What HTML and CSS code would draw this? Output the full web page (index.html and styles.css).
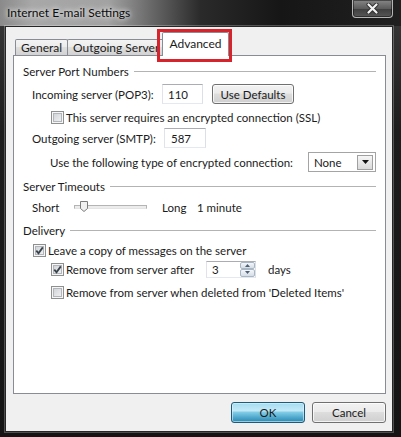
FILE: index.html
```html
<!DOCTYPE html>
<html lang="en">
<head>
  <meta charset="UTF-8">
  <meta name="viewport" content="width=device-width, initial-scale=1.0">
  <title>Internet E-mail Settings</title>
  <link rel="stylesheet" href="styles.css">
</head>
<body>
  <div class="window">
    <div class="titlebar">
      <span class="title">Internet E-mail Settings</span>
      <div class="close-btn">
        <svg width="13" height="11" viewBox="0 0 13 11">
          <path d="M2.5 1.5 L10.5 9.5 M10.5 1.5 L2.5 9.5" stroke="#2e2e2e" stroke-width="4" stroke-linecap="round"/>
          <path d="M2.5 1.5 L10.5 9.5 M10.5 1.5 L2.5 9.5" stroke="#f2f2f2" stroke-width="2.2" stroke-linecap="round"/>
        </svg>
      </div>
    </div>
    <div class="frame">
      <div class="client">
        <div class="tabs">
          <div class="tab tab-general">General</div>
          <div class="tab tab-outgoing">Outgoing Server</div>
          <div class="tab tab-advanced active">Advanced</div>
        </div>
        <div class="panel">
          <div class="group-title">Server Port Numbers</div>
          <div class="row row-port">
            <span class="label-in">Incoming server (POP3):</span>
            <div class="textbox port-in">110</div>
            <div class="btn btn-defaults">Use Defaults</div>
          </div>
          <div class="row row-ssl">
            <span class="check"></span>
            <span>This server requires an encrypted connection (SSL)</span>
          </div>
          <div class="row row-out">
            <span class="label-out">Outgoing server (SMTP):</span>
            <div class="textbox port-out">587</div>
          </div>
          <div class="row row-enc">
            <span>Use the following type of encrypted connection:</span>
            <div class="select">
              <span>None</span>
              <span class="arrow">
                <svg width="7" height="4" viewBox="0 0 7 4"><path d="M0 0 H7 L3.5 4 Z" fill="#111"/></svg>
              </span>
            </div>
          </div>

          <div class="group-title group-timeouts">Server Timeouts</div>
          <div class="row row-slider">
            <span class="label-short">Short</span>
            <div class="slider">
              <div class="track"></div>
              <svg class="thumb" width="8" height="11" viewBox="0 0 8 11">
                <path d="M0.5 0.5 H7.5 V7.5 L4 10.5 L0.5 7.5 Z" fill="#f1f1f1" stroke="#7c7c7c"/>
              </svg>
            </div>
            <span class="label-long">Long</span>
            <span>1 minute</span>
          </div>

          <div class="group-title group-delivery">Delivery</div>
          <div class="row row-leave">
            <span class="check checked">
              <svg width="9" height="9" viewBox="0 0 9 9"><path d="M1.3 4.6 L3.5 7.2 L7.8 1.4" fill="none" stroke="#39434c" stroke-width="1.8"/></svg>
            </span>
            <span>Leave a copy of messages on the server</span>
          </div>
          <div class="row row-after">
            <span class="check checked">
              <svg width="9" height="9" viewBox="0 0 9 9"><path d="M1.3 4.6 L3.5 7.2 L7.8 1.4" fill="none" stroke="#39434c" stroke-width="1.8"/></svg>
            </span>
            <span class="label-after">Remove from server after</span>
            <div class="spinner">
              <span class="spin-value">3</span>
              <div class="spin-btns">
                <span><svg width="5" height="3" viewBox="0 0 5 3"><path d="M0 3 L2.5 0 L5 3 Z" fill="#4d6073"/></svg></span>
                <span><svg width="5" height="3" viewBox="0 0 5 3"><path d="M0 0 L2.5 3 L5 0 Z" fill="#4d6073"/></svg></span>
              </div>
            </div>
            <span class="days">days</span>
          </div>
          <div class="row row-deleted">
            <span class="check"></span>
            <span>Remove from server when deleted from 'Deleted Items'</span>
          </div>
        </div>
        <div class="actions">
          <div class="btn btn-ok">OK</div>
          <div class="btn btn-cancel">Cancel</div>
        </div>
      </div>
    </div>
  </div>
</body>
</html>
```

FILE: styles.css
```css
* {
  margin: 0;
  padding: 0;
  box-sizing: border-box;
}

body {
  background: #000;
  font-family: Lato, "Noto Sans", sans-serif;
  font-size: 11.5px;
  color: #1b1b1b;
}

.window {
  width: 401px;
  height: 437px;
  display: flex;
  flex-direction: column;
  background: linear-gradient(to bottom, #3a3a3a, #1d1d1d 30%, #141414);
}

.titlebar {
  height: 26px;
  display: flex;
  align-items: flex-start;
  background: linear-gradient(to right, #8a8a8a 0%, #a8a8a8 8%, #a2a2a2 27%, #6c6c6c 37%, #2a2a2a 50%, #161616 70%, #202020 100%);
}

.title {
  padding-left: 7px;
  line-height: 26px;
  font-size: 12px;
  color: #0c0c0c;
  text-shadow: 0 0 5px #fff, 0 0 9px rgba(255, 255, 255, 0.6);
}

.close-btn {
  margin-left: auto;
  margin-right: 8px;
  width: 41px;
  height: 18px;
  border: 1px solid #b5b5b5;
  border-top: none;
  border-radius: 0 0 4px 4px;
  background: linear-gradient(#878787, #5c5c5c 50%, #3e3e3e 51%, #575757 100%);
  box-shadow: inset 0 0 0 1px rgba(0, 0, 0, 0.45);
  display: flex;
  align-items: center;
  justify-content: center;
}

.frame {
  flex: 1;
  display: flex;
  padding: 0 8px 5px 5px;
}

.client {
  flex: 1;
  display: flex;
  flex-direction: column;
  background: #f0f0f0;
  border: 1px solid #262626;
  box-shadow: 0 0 0 1px rgba(255, 255, 255, 0.25);
  padding: 5px 6px 8px 7px;
}

/* tabs */
.tabs {
  display: flex;
  align-items: flex-end;
  height: 24px;
  padding-left: 2px;
  margin-bottom: -1px;
  position: relative;
  z-index: 1;
}

.tab {
  height: 16px;
  margin-bottom: 1px;
  margin-right: -1px;
  border: 1px solid #898c95;
  border-bottom: none;
  border-radius: 2px 2px 0 0;
  background: linear-gradient(#f3f3f3, #ebebeb 50%, #dedede 50%, #d2d2d2);
  display: flex;
  align-items: center;
  justify-content: center;
  white-space: nowrap;
  font-size: 12px;
}

.tab-general {
  width: 53px;
}

.tab-outgoing {
  width: 97px;
  justify-content: flex-start;
  padding-left: 5px;
  overflow: hidden;
}

.tab.active {
  width: 67px;
  height: 24px;
  margin-bottom: 0;
  margin-left: -1px;
  padding-bottom: 2px;
  background: #fff;
  position: relative;
  z-index: 2;
}

.tab.active::after {
  content: "";
  position: absolute;
  left: -6px;
  right: -4px;
  top: -4px;
  bottom: -6px;
  border: 3px solid #d6232c;
}

.panel {
  flex: 1;
  background: #fff;
  border: 1px solid #898c95;
  padding: 8px 9px 0 9px;
}

.group-title {
  display: flex;
  align-items: center;
  height: 14px;
}

.group-title::after {
  content: "";
  flex: 1;
  height: 1px;
  margin-left: 5px;
  background: #b3b3b3;
}

.group-timeouts,
.group-delivery {
  margin-top: 7px;
}

.row {
  display: flex;
  align-items: center;
  white-space: nowrap;
}

.row-port {
  margin-top: 6px;
  height: 20px;
  padding-left: 9px;
}

.label-in {
  width: 130px;
}

.textbox {
  height: 20px;
  border: 1px solid;
  border-color: #abadb3 #dbdfe6 #e3e9ef #e2e3ea;
  background: #fff;
  display: flex;
  align-items: center;
  padding-left: 5px;
}

.port-in {
  width: 41px;
}

.btn {
  display: flex;
  align-items: center;
  justify-content: center;
  border: 1px solid #707070;
  border-radius: 3px;
  background: linear-gradient(#f2f2f2, #ebebeb 45%, #dddddd 50%, #cfcfcf);
  box-shadow: inset 0 0 0 1px rgba(255, 255, 255, 0.75);
}

.btn-defaults {
  margin-left: 9px;
  width: 82px;
  height: 20px;
}

.row-ssl {
  margin-top: 5px;
  height: 16px;
  padding-left: 28px;
}

.row-out {
  margin-top: 3px;
  height: 20px;
  padding-left: 9px;
}

.label-out {
  width: 132px;
}

.port-out {
  width: 42px;
  padding-left: 6px;
}

.row-enc {
  margin-top: 4px;
  height: 20px;
  padding-left: 27px;
}

.select {
  margin-left: auto;
  width: 68px;
  height: 20px;
  border: 1px solid #a4a4a4;
  background: #fff;
  display: flex;
  align-items: center;
  padding: 0 2px 0 5px;
}

.select .arrow {
  margin-left: auto;
  width: 16px;
  height: 15px;
  border: 1px solid #a0a0a0;
  background: linear-gradient(#f6f6f6, #dadada);
  display: flex;
  align-items: center;
  justify-content: center;
}

/* slider */
.row-slider {
  margin-top: 5px;
  height: 18px;
  padding-left: 9px;
}

.label-short {
  width: 42px;
}

.slider {
  width: 73px;
  height: 18px;
  display: flex;
  align-items: center;
  position: relative;
}

.slider .track {
  width: 100%;
  height: 4px;
  border: 1px solid #b4b4b4;
  border-bottom-color: #e4e4e4;
  background: #ececec;
}

.slider .thumb {
  position: absolute;
  left: 6px;
  top: 3px;
}

.label-long {
  margin-left: 15px;
  width: 35px;
}

/* checkboxes */
.check {
  flex: none;
  width: 13px;
  height: 13px;
  margin-right: 2px;
  border: 1px solid #8e8f8f;
  background: linear-gradient(135deg, #c9cdd2, #f7f7f7);
  box-shadow: inset 0 0 0 1px #f6f6f6, inset 0 0 0 2px #b2b6bb;
  display: flex;
  align-items: center;
  justify-content: center;
}

.row-leave {
  margin-top: 5px;
  height: 16px;
  padding-left: 10px;
}

.row-after {
  margin-top: 2px;
  height: 18px;
  padding-left: 28px;
}

.label-after {
  width: 140px;
}

.spinner {
  width: 50px;
  height: 17px;
  border: 1px solid;
  border-color: #abadb3 #dbdfe6 #e3e9ef #e2e3ea;
  background: #fff;
  display: flex;
}

.spin-value {
  flex: 1;
  padding-left: 5px;
  display: flex;
  align-items: center;
}

.spin-btns {
  width: 15px;
  display: flex;
  flex-direction: column;
}

.spin-btns span {
  flex: 1;
  border: 1px solid #a9b6c4;
  border-radius: 2px;
  background: linear-gradient(#f4f7fa, #d5dde6);
  display: flex;
  align-items: center;
  justify-content: center;
}

.days {
  margin-left: 12px;
}

.row-deleted {
  margin-top: 6px;
  height: 16px;
  padding-left: 28px;
}

/* dialog buttons */
.actions {
  display: flex;
  justify-content: flex-end;
  gap: 7px;
  margin-top: 8px;
}

.btn-ok,
.btn-cancel {
  width: 74px;
  height: 21px;
}

.btn-ok {
  border-color: #1f5b78;
  background: linear-gradient(#a4dcf0, #c3e9f7 40%, #7fcbe6 50%, #3f9cc2 85%, #3088ae);
  box-shadow: inset 0 0 0 1px rgba(220, 245, 255, 0.6);
}
```
